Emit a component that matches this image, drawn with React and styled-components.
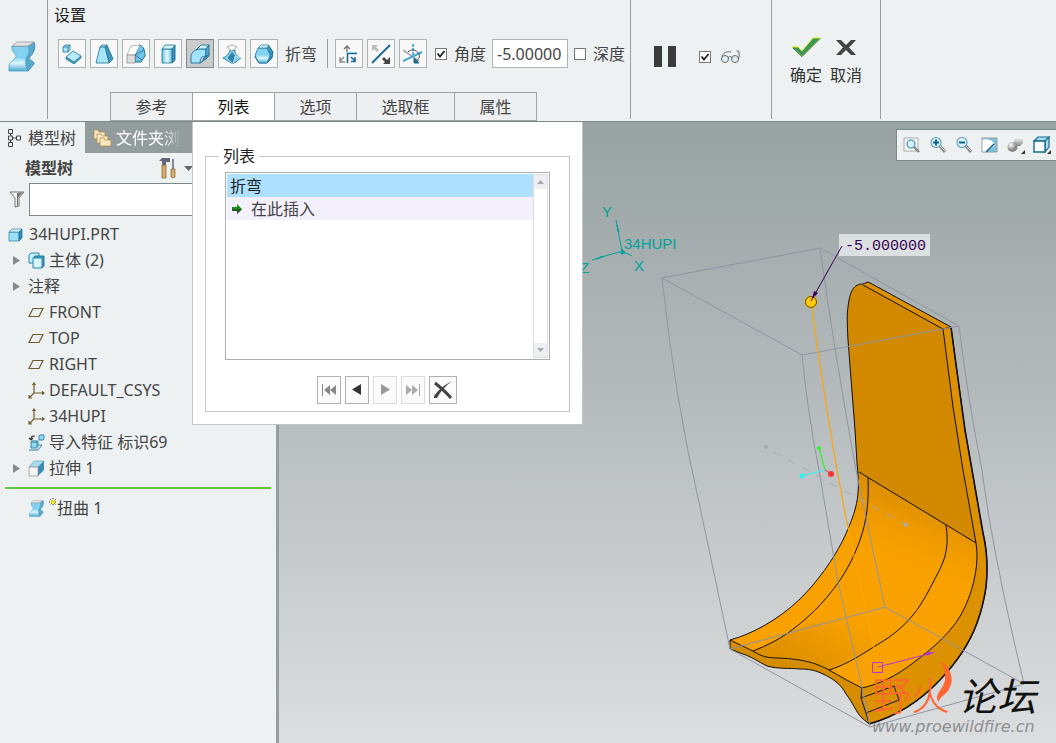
import React from "react";
import styled, { createGlobalStyle } from "styled-components";

const GlobalStyle = createGlobalStyle`
  * { box-sizing: border-box; }
  body {
    margin: 0;
    background: #edf1f2;
    color: #444;
    font: 16px/24px "Noto Sans", "Noto Sans CJK SC", sans-serif;
  }
  button, input { font: inherit; color: inherit; }
`;

const Page = styled.div`
  min-height: 100vh;
  display: flex;
  flex-direction: column;
  overflow: hidden;
`;

/* ---------- ribbon ---------- */

const Ribbon = styled.header`
  display: flex;
  height: 122px;
  background: #edf1f2;
  border-bottom: 1px solid #7c8889;
`;

const Section = styled.section`
  flex: none;
  display: flex;
  flex-direction: ${(p) => (p.$column ? "column" : "row")};
  height: 119px;
  width: ${(p) => p.$width};
  padding: ${(p) => p.$pad || "0"};
  gap: ${(p) => p.$gap || "0"};
  border-right: 1px solid #9a9e9f;
`;

const SectionTitle = styled.h1`
  margin: 0;
  padding-left: 6px;
  font-size: 16px;
  line-height: 24px;
  font-weight: 400;
  color: #222;
`;

const ToolRow = styled.div`
  display: flex;
  align-items: center;
  gap: 4px;
  height: 29px;
  margin: 12px 0 24px;
  padding-left: 10px;
  white-space: nowrap;
`;

const ToolButton = styled.button`
  flex: none;
  width: 28px;
  height: 29px;
  padding: 0;
  display: grid;
  place-items: center;
  border: 1px solid ${(p) => (p.$active ? "#858789" : "#b0b3b4")};
  background: ${(p) => (p.$active ? "#c9cbcd" : "#f8f8f9")};
`;

const ToolLabel = styled.span`
  padding: 0 6px 0 3px;
`;

const ToolDivider = styled.span`
  width: 1px;
  height: 29px;
  margin-right: 3px;
  background: #9a9e9f;
`;

const CheckLabel = styled.label`
  display: flex;
  align-items: center;
  align-self: ${(p) => (p.$top ? "flex-start" : "auto")};
  height: 24px;
  gap: 7px;
  padding: 0 2px 0 ${(p) => (p.$lead ? "4px" : "2px")};
`;

const Check = styled.input`
  appearance: none;
  flex: none;
  width: 12px;
  height: 12px;
  margin: 0;
  border: 1px solid #777;
  background: #fff;
  &:checked {
    background: #fff url("data:image/svg+xml,%3Csvg xmlns='http://www.w3.org/2000/svg' viewBox='0 0 10 10'%3E%3Cpath d='M1.5 4.5 4 7.5 8.5 2' fill='none' stroke='%23222' stroke-width='1.8'/%3E%3C/svg%3E");
  }
`;

const AngleInput = styled.input`
  width: 76px;
  height: 29px;
  padding: 0 4px;
  border: 1px solid #b0b3b4;
  background: #fff;
  border-radius: 0;
`;

const Tabs = styled.nav`
  display: flex;
  padding-left: 62px;
`;

const Tab = styled.button`
  width: ${(p) => (p.$wide ? "99px" : "83px")};
  height: 29px;
  margin-right: -1px;
  padding: 0;
  border: 1px solid #a0a3a5;
  background: ${(p) => (p.$active ? "#fff" : "#edeff1")};
  color: ${(p) => (p.$active ? "#111" : "#444")};
`;

const BareButton = styled.button`
  display: flex;
  flex-direction: column;
  align-items: center;
  gap: 4px;
  padding: 0;
  border: 0;
  background: none;
  color: #333;
`;

/* ---------- side bar ---------- */

const Main = styled.main`
  position: relative;
  flex: 1;
  display: flex;
`;

const Sidebar = styled.aside`
  flex: none;
  width: 279px;
  border-right: 3px solid #949fa0;
  background: #edf1f2;
`;

const SideTabs = styled.div`
  display: flex;
  height: 31px;
  background: #949d9e;
`;

const SideTab = styled.button`
  display: flex;
  align-items: center;
  gap: ${(p) => (p.$active ? "6px" : "4px")};
  width: ${(p) => (p.$active ? "85px" : "107px")};
  padding: 0 0 0 ${(p) => (p.$active ? "7px" : "8px")};
  border: 0;
  overflow: hidden;
  white-space: nowrap;
  background: ${(p) => (p.$active ? "#edf1f2" : "#949d9e")};
  color: ${(p) => (p.$active ? "#444" : "#fff")};
`;

const FadedLabel = styled.span`
  width: 66px;
  overflow: hidden;
  mask-image: linear-gradient(to right, #000 46px, transparent 66px);
`;

const SideHeader = styled.div`
  display: flex;
  align-items: center;
  gap: 8px;
  height: 30px;
  padding-left: 25px;
`;

const SideTitle = styled.h2`
  flex: none;
  width: 126px;
  margin: 0;
  font-size: 16px;
  line-height: 24px;
  font-weight: 700;
`;

const FilterRow = styled.label`
  display: flex;
  align-items: center;
  gap: 4px;
  padding: 0 8px 0 9px;
  margin-bottom: 5px;
`;

const FilterInput = styled.input`
  flex: 1;
  min-width: 0;
  height: 33px;
  border: 1px solid #7c8889;
  background: #fff;
  border-radius: 0;
`;

const Tree = styled.ul`
  list-style: none;
  margin: 0;
  padding: 0;
`;

const TreeItem = styled.li`
  display: flex;
  align-items: center;
  height: 26px;
  gap: 4px;
  padding-left: ${(p) => (p.$root ? "8px" : "12px")};
  white-space: nowrap;
`;

const ArrowSlot = styled.span`
  flex: none;
  display: flex;
  width: 12px;
`;

const MarkedName = styled.span`
  display: flex;
  align-items: center;
`;

const InsertLine = styled.hr`
  height: 2px;
  margin: 6px 5px;
  border: 0;
  background: #62c63f;
`;

/* ---------- list panel ---------- */

const Panel = styled.section`
  position: absolute;
  z-index: 2;
  left: 192px;
  top: 0;
  width: 391px;
  height: 303px;
  padding: 22px 12px 12px;
  border: 1px solid #c3c6c9;
  border-top: 0;
  background: #fff;
`;

const Group = styled.fieldset`
  height: 268px;
  margin: 0;
  padding: 4px 19px 0;
  border: 1px solid #c3c6c9;
`;

const GroupLegend = styled.legend`
  margin-left: -6px;
  padding: 0 4px;
  line-height: 24px;
  color: #222;
`;

const ListBox = styled.div`
  display: flex;
  height: 188px;
  padding: 1px;
  border: 1px solid #aaaeb0;
  background: #fff;
`;

const Options = styled.ul`
  flex: 1;
  list-style: none;
  margin: 0;
  padding: 0;
`;

const Option = styled.li`
  display: flex;
  align-items: center;
  gap: 8px;
  height: 23px;
  padding-left: ${(p) => (p.$selected ? "3px" : "4px")};
  background: ${(p) => (p.$selected ? "#aee1ff" : "#f5f0fe")};
  color: ${(p) => (p.$selected ? "#222" : "#444")};
`;

const ScrollTrack = styled.div`
  display: flex;
  flex-direction: column;
  justify-content: space-between;
  width: 15px;
  border: 1px solid #dcdee3;
`;

const ScrollButton = styled.button`
  display: grid;
  place-items: center;
  width: 13px;
  height: 14px;
  padding: 0;
  border: 0;
  background: #eeeff3;
`;

const NavRow = styled.div`
  display: flex;
  justify-content: center;
  gap: 4px;
  padding: 16px 2px 0 0;
`;

const NavButton = styled.button`
  display: grid;
  place-items: center;
  width: ${(p) => (p.$wide ? "28px" : "24px")};
  height: 28px;
  padding: 0;
  border: 1px solid ${(p) => (p.disabled ? "#d8dbdd" : "#b0b3b5")};
  background: #fbfbfb;
`;

/* ---------- graphics area ---------- */

const Viewport = styled.section`
  position: relative;
  flex: 1;
  display: flex;
  min-width: 0;
  background: linear-gradient(#98a2a3, #b9bec0 50%, #dcdedf);
`;

const Scene = styled.svg`
  flex: 1;
  width: 100%;
  display: block;
`;

const ViewBar = styled.div`
  position: absolute;
  top: 7px;
  right: 0;
  display: flex;
  align-items: center;
  gap: 8px;
  height: 32px;
  padding: 0 5px 0 6px;
  border: 1px solid #7c8889;
  border-right: 0;
  background: #edf1f2;
`;

const ViewButton = styled.button`
  display: grid;
  place-items: center;
  width: 18px;
  height: 20px;
  padding: 0;
  border: 0;
  background: none;
`;

/* ---------- icons ---------- */

const DefsSvg = styled.svg`
  position: absolute;
`;

const Defs = () => (
  <DefsSvg width="0" height="0" aria-hidden="true">
    <defs>
      <linearGradient id="iceV" x2="0" y2="1">
        <stop stopColor="#8ad0ec" /><stop offset=".45" stopColor="#7fd3f3" /><stop offset=".68" stopColor="#e0f7ff" /><stop offset="1" stopColor="#4aa9d2" />
      </linearGradient>
      <linearGradient id="iceH">
        <stop stopColor="#62bfe5" /><stop offset=".5" stopColor="#e8faff" /><stop offset="1" stopColor="#65bde0" />
      </linearGradient>
      <linearGradient id="grey" x2="0" y2="1">
        <stop stopColor="#fff" /><stop offset="1" stopColor="#888" />
      </linearGradient>
      <radialGradient id="ball" cx=".35" cy=".3">
        <stop stopColor="#fff" /><stop offset="1" stopColor="#888" />
      </radialGradient>
    </defs>
  </DefsSvg>
);

const Icon = ({ w = 20, h = w, box, children }) => (
  <svg width={w} height={h} viewBox={box || `0 0 ${w} ${h}`} fill="none" aria-hidden="true">
    {children}
  </svg>
);

const WarpIcon = ({ w, h }) => (
  <Icon w={w} h={h} box="0 0 28 31">
    <path d="M20 5 26 1C28 7 26 12 21 17 20 19 27 20 26 23L20 30 15 18z" fill="#58a9cd" stroke="#2f7ea8" strokeWidth=".8" />
    <path d="M4 5H20C22 10 21 13 18 17 17 22 18 26 20 30H1V25C1 21 6 20 8 16 9 13 3 11 4 5z" fill="url(#iceV)" stroke="#4aa0c6" strokeWidth=".8" />
    <path d="M4 5 9 1h17l-6 4z" fill="#e4e4e6" stroke="#999" strokeWidth=".8" />
  </Icon>
);

const dark = "#1e7196";
const toolIcons = [
  ["变换", <Icon><path d="M1 3 3 1h5v5L6 8H1zM1 3h5v5M6 3l2-2" fill="#a9e5fa" stroke={dark} strokeWidth=".8" /><path d="M4 13v2l8 5 7-6v-2l-7 6z" fill="#4ba2c8" stroke={dark} strokeWidth=".7" /><path d="m4 13 7-6 8 5-7 6z" fill="#b6ebfc" stroke={dark} strokeWidth=".8" /></Icon>],
  ["锥度", <Icon><path d="m6 3 2-2h5l-2 2z" fill="#d8f3fc" stroke={dark} strokeWidth=".8" /><path d="m11 3 2-2 6 14-4 4z" fill="#3f96bf" stroke={dark} strokeWidth=".8" /><path d="M6 3h5l4 16H2z" fill="#a8e5fa" stroke={dark} strokeWidth=".8" /></Icon>],
  ["骨架", <Icon><path d="M13 1c5 1 6 6 6 11l-4 6H9v-6z" fill="#70c4e7" stroke={dark} /><path d="M1 11 5 2l9-1-5 10z" fill="#fff" stroke="#999" strokeWidth=".7" /><path d="M1 11h8v8H1z" fill="#ddd" stroke="#888" strokeWidth=".7" /><path d="m9 11 9-5M9 11l7 5" stroke={dark} strokeWidth=".8" /></Icon>],
  ["拉伸", <Icon><path d="M14 5 17 1v15l-3 3z" fill="#3c95be" stroke={dark} /><path d="M4 5h10v14H4z" fill="url(#iceH)" stroke={dark} strokeWidth=".8" /><path d="m4 5 3-4h10l-3 4z" fill="#d1f3ff" stroke={dark} strokeWidth=".8" /></Icon>],
  ["折弯", <Icon><path d="m10 19 3-2c0-3 1-4 3-5l3-3v3l-3 3z" fill="#3d91b8" stroke={dark} strokeWidth=".8" /><path d="M1 19v-6c0-4 3-7 8-8h7v7c-4 0-6 2-6 7z" fill="#a2e4fa" stroke={dark} strokeWidth=".9" /><path d="M6 6 11 1h8l-3 4H9z" fill="#d0f1fd" stroke={dark} strokeWidth=".9" /><path d="m16 5 3-4v9l-3 3z" fill="#53a8cc" stroke={dark} strokeWidth=".9" /></Icon>],
  ["扭转", <Icon><path d="M8 6C7 10 5 12 1 14l10 6 8-6c-5-2-6-5-6-8l-3 1z" fill="#83cfee" stroke={dark} strokeWidth=".8" /><path d="m10 7-5 7 6 6 2-8 6 2-6-3z" fill="#2f83ac" stroke="#d4f1fb" strokeWidth=".6" /><path d="m5 3 5-2 5 2-5 4z" fill="#fff" stroke="#999" strokeWidth=".8" /></Icon>],
  ["雕刻", <Icon><path d="m4 5 3-3h8l4 6-1 6-5 5H5l-4-6z" fill="#3790b9" stroke={dark} /><path d="M4 4h9l3 7-3 8H5l-4-8z" fill="url(#iceV)" stroke={dark} strokeWidth=".6" /><path d="m4 4 3-3h8l-2 3z" fill="#d1f1fd" stroke={dark} strokeWidth=".7" /></Icon>],
];

const axisIcons = [
  ["切换轴", <Icon><path d="M8 8V3M5 5l3-3 3 3" stroke="#777" strokeWidth="1.4" /><path d="M5 13l-4 4M1 13v5h5" stroke="#888" strokeWidth="1.4" /><path d="M18 9.500H8.500V19" stroke="#1b6c90" strokeWidth="1.600" /><path d="m12 13 4 4m0-4v4.500h-4" stroke="#1b6c90" strokeWidth="1.600" /><path d="M8 8.500h10" stroke="#78cfee" /></Icon>],
  ["反转轴", <Icon><path d="m1 19 18-18" stroke="#1b6c90" strokeWidth="2" /><path d="M1 1h6L5 3l3 3-2 2-3-3-2 2z" fill="#bbb" /><path d="M19 20h-7l2-2-3-3 2-2 3 3 3-3z" fill="#444" /></Icon>],
  ["轴向增量", <Icon><path d="m0 6 10 7 6 4" stroke="#aaa" strokeWidth="1.6" /><path d="M0 17 19 8" stroke="#43a7d0" strokeWidth="2" /><path d="M10 0v11" stroke="#43a7d0" strokeWidth="1.8" strokeDasharray="3 1" /><path d="M5 8c3-3 8-3 11 2 1 3 0 5-3 7" stroke="#555" /><path d="M11 14v5h5z" fill="#1b6c90" stroke="#1b6c90" /></Icon>],
];

const TreeArrow = () => <Icon w={8} h={9}><path d="M1 0 8 4.5 1 9z" fill="#888" /></Icon>;
const PlaneIcon = () => <Icon w={17} h={17}><path d="M5 4.500h10l-4 8H1z" stroke="#705b2d" strokeWidth="1.200" /></Icon>;
const CsysIcon = () => <Icon w={17} h={17}><path d="M6 1v10h10M6 11l-5 5M4.500 3 6 1l1.500 2M14 9.500l2 1.500-2 1.500M1 13v3h3" stroke="#705b2d" strokeWidth="1.200" /></Icon>;
const PartIcon = () => <Icon w={17} h={17}><path d="M1 6h10v9H1z" fill="#9de1f8" stroke="#2c7fa5" strokeWidth=".7" /><path d="m1 6 3-3h10l-3 3z" fill="#d5f3fc" stroke="#2c7fa5" strokeWidth=".7" /><path d="m11 6 3-3v9l-3 3z" fill="#3289b2" stroke="#24739a" strokeWidth=".7" /></Icon>;
const BodyIcon = () => <Icon w={17} h={17}><path d="M1 3 3 1h8v10H1z" fill="#c5eefb" stroke="#2987ae" /><path d="m5 6 2-2h9v10l-2 2z" fill="#3f99c2" stroke="#207ba2" /><path d="M5 6h9v10H5z" fill="#d8f5ff" stroke="#2987ae" /></Icon>;
const ImportIcon = () => <Icon w={17} h={17}><path d="M3 5c0-3 2-3 4-3M1 4l2 2 2-2" stroke="#333" strokeWidth="1.200" /><path d="M11 2 12 1h4v4l-1 1h-4zM3 8h6v6H3z" fill="#90daf5" stroke="#267ca2" strokeWidth=".9" /><path d="M1 16h9l4-5h-3M3 8l1-1h6v6" stroke="#267ca2" /></Icon>;
const ExtrudeIcon = () => <Icon w={17} h={17}><path d="M1 7 6 1h10l-6 6z" fill="#a8d9ec" stroke="#6eaac2" strokeWidth=".7" /><path d="m10 7 6-6v9l-6 6z" fill="#398db5" /><path d="M1 7h9v9H1z" fill="#f5f3f5" stroke="#999" strokeWidth=".8" /></Icon>;

const StarMark = () => <Icon w={8} h={20}><path d="M4 0v8M0 4h8M1 1l6 6M7 1 1 7" stroke="#333" strokeDasharray="1 1" /><circle cx="4" cy="4" r="2" fill="#fdf000" /></Icon>;

const Lens = ({ sign }) => (
  <Icon w={18} h={18}>
    <path d="m11 10 5 6" stroke="#888" strokeWidth="3" /><path d="m11 10 5 5" stroke="#ddd" />
    <circle cx="7" cy="6.500" r="5" fill="#daf1fb" stroke="#5a9dba" strokeWidth="1.100" />
    <path d={sign} stroke="#0d658c" strokeWidth="2" />
  </Icon>
);

const viewIcons = [
  ["重新调整", <Icon w={18} h={18}><path d="M1 2h14v13H1z" fill="#f8f9fa" stroke="#aaa" /><path d="m11 11 5 5" stroke="#888" strokeWidth="2.400" /><circle cx="8" cy="8" r="4" fill="#d7f1fb" stroke="#3287ab" strokeWidth="1.100" /></Icon>],
  ["放大", <Lens sign="M4 6.500h6M7 3.500v6" />],
  ["缩小", <Lens sign="M4 6.500h6" />],
  ["重画", <Icon w={18} h={18}><path d="M1 2h15v14H1z" fill="#7bc3df" stroke="#999" /><path d="M1.500 3.500c7-1 11 1 12 6L5 15.500H1.500z" fill="#fff" /><path d="m5 16 8-8" stroke="#155f84" strokeWidth="1.500" /></Icon>],
  ["显示样式", <Icon w={18} h={18}><path d="M7 4 9 1h7v6l-3 3H7z" fill="url(#grey)" /><circle cx="5.500" cy="11" r="5" fill="url(#ball)" /><path d="M18 14v4h-4z" fill="#333" /></Icon>],
  ["已保存方向", <Icon w={18} h={18}><path d="m1 5 4-4h11l-4 4zM12 5l4-4v10l-4 5z" fill="#a9dced" stroke="#176b91" strokeWidth="1.200" /><path d="M1 5h11v11H1z" fill="#fff" stroke="#176b91" strokeWidth="1.400" /><path d="M18 14v4h-4z" fill="#333" /></Icon>],
];

/* ---------- data ---------- */

const treeRows = [
  { icon: <BodyIcon />, text: "主体 (2)", open: true },
  { icon: null, text: "注释", open: true },
  { icon: <PlaneIcon />, text: "FRONT" },
  { icon: <PlaneIcon />, text: "TOP" },
  { icon: <PlaneIcon />, text: "RIGHT" },
  { icon: <CsysIcon />, text: "DEFAULT_CSYS" },
  { icon: <CsysIcon />, text: "34HUPI" },
  { icon: <ImportIcon />, text: "导入特征 标识69" },
  { icon: <ExtrudeIcon />, text: "拉伸 1", open: true },
];

const navIcons = [
  ["第一个", false, <Icon w={16} h={14}><path d="M1.500 1v12" stroke="#888" /><path d="M9 2v10L3 7zM15 2v10L9 7z" fill="#888" /></Icon>],
  ["上一个", false, <Icon w={16} h={14}><path d="M12 1v11L3 6.500z" fill="#333" /></Icon>],
  ["下一个", true, <Icon w={16} h={14}><path d="M4 1v11l9-5.500z" fill="#999" /></Icon>],
  ["最后一个", true, <Icon w={16} h={14}><path d="M14.500 1v12" stroke="#aaa" /><path d="M1 2v10l6-5zM7 2v10l6-5z" fill="#aaa" /></Icon>],
];

/* ---------- 3D scene ---------- */

const RIGHT_EDGE =
  "L955 357L965 430L983 533C987 550 988 568 986 587C984 601 981 612 977 623C969 645 957 662 940 680C921 700 898 716 869 724";
const BOTTOM_EDGE =
  "L862 718C856 712 853 703 846 694C841 684 832 678 823 674C815 670 808 669 800 669C788 668 778 669 767 666C757 661 752 657 743 654L730 649";
const OUTLINE =
  `M730 640C752 634 778 620 800 599C818 581 833 560 843 540C852 521 857 507 858 493C859 483 858 473 857 463L855 430L848 340C847 322 847 313 848 307C850 290 854 284 863 284L868 282L872 284L951 327${RIGHT_EDGE}${BOTTOM_EDGE}Z`;
const RIM = "C979 562 975 585 965 607C955 629 936 646 913 663C896 676 880 684 862 688";
const PROFILE = "M730 640L753 651C762 657 769 658 778 658C805 659 818 664 829 670C841 677 852 683 862 688";

const Graphics = () => (
  <Scene viewBox="279 122 777 621" preserveAspectRatio="xMinYMin slice" role="img" aria-label="34HUPI">
    <defs>
      <linearGradient id="seat" gradientUnits="userSpaceOnUse" x1="930" y1="495" x2="905" y2="560">
        <stop stopColor="#d78c00" /><stop offset=".500" stopColor="#ed9900" /><stop offset="1" stopColor="#f8a100" />
      </linearGradient>
      <linearGradient id="lip" gradientUnits="userSpaceOnUse" x1="830" y1="610" x2="800" y2="665">
        <stop stopColor="#d88d00" stopOpacity="0" /><stop offset="1" stopColor="#d88d00" stopOpacity=".8" />
      </linearGradient>
    </defs>

    <path d={OUTLINE} fill="url(#seat)" />
    <path d="M753 651C790 635 830 595 880 643L829 670C818 664 805 659 778 658C769 658 762 657 753 651Z" fill="url(#lip)" />
    <path d="M859 472L857 450L848 340C847 313 847 284 863 284L943 329L963 470L976 543Z" fill="#d28900" />
    <path d={`M863 284L868 282L872 284L951 327${RIGHT_EDGE}L862 688C880 684 896 676 913 663C936 646 955 629 965 607C975 585 979 562 976 543L963 470L943 329Z`} fill="#dc9100" />
    <path d={`${PROFILE}L869 724${BOTTOM_EDGE}Z`} fill="#d68c00" />

    <g fill="none" stroke="#111">
      <path d={OUTLINE} />
      <path d={`M951 327${RIGHT_EDGE}`} strokeWidth="1.600" />
      <path d="M863 285L943 329L951 327M943 329L953 407L963 470L976 543M859 472L976 543" />
      <path d={`M976 543${RIM}`} />
      <path d={PROFILE} />
      <path d="M868 478C869 500 867 521 860 540C854 557 847 570 838 583C823 604 807 619 788 633C778 640 766 646 753 651" />
      <path d="M946 525C949 545 946 558 938 573C930 588 923 603 913 615C903 627 892 636 880 643C864 653 848 664 829 670" />
      <path d="M862 688L861 698L866 713L869 724M861 698L894 686L899 700L866 713" />
    </g>

    <g fill="none" stroke="#8f96a3">
      <path d="M662 278L820 248L959 326L802 355Z" />
      <path d="M662 278Q675 400 700 507L730 649M820 248Q834 350 856 470L885 607M802 355Q808 415 819 470L838 582L862 687L870 727M959 326Q968 400 982 470Q992 550 1024 684" />
      <path d="M730 649L885 607L1024 684L870 727Z" />
    </g>

    <path d="M812 308Q820 370 837 470L847 523L877 663" fill="none" stroke="#ffa500" strokeWidth="1.200" />
    <path d="M774 452L906 525" stroke="#a9adb0" strokeDasharray="8 8" />
    <circle cx="766" cy="447" r="2" fill="#a6abad" /><circle cx="906" cy="525" r="2" fill="#aaadb0" />
    <path d="M819 448L825 470" stroke="#2cf52c" strokeWidth="1.200" />
    <path d="M802 476L825 470" stroke="#30f4f4" strokeWidth="1.200" />
    <path d="M825 470L831 474" stroke="#f33" />
    <circle cx="819" cy="448" r="2" fill="#2cf52c" /><circle cx="802" cy="476" r="2.500" fill="#30f4f4" /><circle cx="831" cy="474" r="3" fill="#fa3434" />
    <path d="M872.500 662.500h10v10h-10zM878 667L928 654" fill="none" stroke="#b536d5" />
    <path d="M935 652l-8 4-1-4z" fill="#b536d5" />

    <g stroke="#00a29a" fill="#00a29a">
      <path d="M622 251L616 220M622 251L592 260M622 251L632 256" fill="none" />
      <path d="M617 225l2 7h-1zM596 259l7-3v1zM622 249l3 4-4 1z" />
    </g>
    <g fill="#00a29a" fontFamily="Liberation Sans, sans-serif" fontSize="15">
      <text x="602" y="217">Y</text>
      <text x="634" y="271">X</text>
      <text x="580" y="273">Z</text>
      <text x="624" y="249">34HUPI</text>
    </g>

    <rect x="839" y="234" width="91" height="22" fill="#fff" fillOpacity=".620" />
    <text x="845" y="250" fill="#350057" fontFamily="Liberation Mono, monospace" fontSize="15">-5.000000</text>
    <circle cx="811" cy="302" r="6" fill="#ffc90d" stroke="#ffbf00" />
    <circle cx="811" cy="302" r="5.500" fill="none" stroke="#5f4a08" />
    <path d="M842 246L811 301" stroke="#350057" />
    <path d="M812 299l2-8 4 2z" fill="#350057" />

    <g fontFamily="Noto Sans CJK SC, sans-serif" fontSize="39">
      <g fill="#ff6632">
        <text x="872" y="710" fontWeight="300">野</text>
        <text x="911" y="710" fontWeight="300">火</text>
        <path d="M941 661c11 8 15 22 5 31-5 3-7 7-7 10-7-7 7-15 6-24 0-6-1-11-4-17zM947 671c6 7 5 18-3 24-4 3-5 5-5 7-6-9 12-12 8-31z" />
      </g>
      <text x="958" y="711" fill="#111" fontStyle="italic">论坛</text>
    </g>
    <text x="872" y="732" fill="#8d8f92" fontFamily="DejaVu Sans, sans-serif" fontStyle="italic" fontSize="16">www.proewildfire.cn</text>
  </Scene>
);

/* ---------- app ---------- */

export default function App() {
  return (
    <Page>
      <GlobalStyle />
      <Defs />
      <Ribbon>
        <Section $width="48px" $pad="41px 0 0 8px"><WarpIcon w={28} h={31} /></Section>
        <Section $width="583px" $pad="3px 0 0" $column>
          <SectionTitle>设置</SectionTitle>
          <ToolRow>
            {toolIcons.map(([name, icon], i) => (
              <ToolButton key={name} aria-label={name} $active={i === 4}>{icon}</ToolButton>
            ))}
            <ToolLabel>折弯</ToolLabel>
            <ToolDivider />
            {axisIcons.map(([name, icon]) => (
              <ToolButton key={name} aria-label={name}>{icon}</ToolButton>
            ))}
            <CheckLabel $lead><Check type="checkbox" defaultChecked />角度</CheckLabel>
            <AngleInput aria-label="角度" defaultValue="-5.00000" />
            <CheckLabel><Check type="checkbox" />深度</CheckLabel>
          </ToolRow>
          <Tabs>
            <Tab>参考</Tab>
            <Tab $active>列表</Tab>
            <Tab>选项</Tab>
            <Tab $wide>选取框</Tab>
            <Tab>属性</Tab>
          </Tabs>
        </Section>
        <Section $width="141px" $pad="45px 0 0 22px" $gap="20px">
          <BareButton aria-label="暂停">
            <Icon w={24} h={23}><path d="M1 1h8v21H1zM15 1h8v21h-8z" fill="#3b3b3b" /></Icon>
          </BareButton>
          <CheckLabel $top>
            <Check type="checkbox" defaultChecked aria-label="预览" />
            <Icon w={24} h={14}><g stroke="#666"><circle cx="7" cy="9" r="3.500" fill="#e2f0f6" /><circle cx="17" cy="9" r="3.500" fill="#e2f0f6" /><path d="M4 7c1-4 4-6 9-5M10 8c1-2 3-2 4 0M20.500 9c1-3 1-5 0-8h-2" /></g></Icon>
          </CheckLabel>
        </Section>
        <Section $width="109px" $pad="35px 0 0 18px" $gap="8px">
          <BareButton>
            <Icon w={30} h={24}><path d="M1 12h6l4 4L22 3h7L11 21z" fill="#379660" stroke="#d5e800" /><path d="M2 13 11 21.500 29 3.500" stroke="#176039" /></Icon>
            确定
          </BareButton>
          <BareButton>
            <Icon w={20} h={24}><path d="M0 5h5l5 5 5-5h5l-7 7.500 7 7.500h-5l-5-5-5 5H0l7-7.500z" fill="#444" /></Icon>
            取消
          </BareButton>
        </Section>
      </Ribbon>

      <Main>
        <Sidebar>
          <SideTabs>
            <SideTab $active>
              <Icon w={15} h={20}><path d="M1.500 1.500h4v4h-4zM1.500 8h4v4h-4zM1.500 14.500h4v4h-4zM9.500 8h4v4h-4zM3.500 5.500V8M3.500 12v2.500M5.500 10h4" stroke="#444" /></Icon>
              模型树
            </SideTab>
            <SideTab>
              <Icon w={19} h={19}><g fill="#fbe8c0" stroke="#a98546" strokeWidth=".700"><path d="M1 2h4l1 2h6v7H1z" /><path d="M4 6h4l1 2h6v7H4z" /><path d="M7 10h4l1 2h6v6H7z" /></g></Icon>
              <FadedLabel>文件夹浏览器</FadedLabel>
            </SideTab>
          </SideTabs>
          <SideHeader>
            <SideTitle>模型树</SideTitle>
            <Icon w={17} h={21}><path d="M0 3 3 0h8v4H7v3H3V3z" fill="#667" /><path d="M3 7h4v13H3zM12 11h4v8l-2 1-2-1z" fill="#d7ad68" stroke="#805d2d" strokeWidth=".700" /><path d="M14 1v10" stroke="#667" strokeWidth="1.500" /></Icon>
            <Icon w={9} h={5}><path d="M0 0h9L4.500 5z" fill="#666" /></Icon>
          </SideHeader>
          <FilterRow>
            <Icon w={16} h={17}><path d="M1 1h14l-5 6v8l-4 1V7z" fill="#f4f4f4" stroke="#777" /><path d="m8 2 6-1-5 6v8H8z" fill="#777" /></Icon>
            <FilterInput aria-label="过滤" />
          </FilterRow>
          <Tree>
            <TreeItem $root><PartIcon />34HUPI.PRT</TreeItem>
            {treeRows.map((row) => (
              <TreeItem key={row.text}>
                <ArrowSlot>{row.open && <TreeArrow />}</ArrowSlot>
                {row.icon}
                {row.text}
              </TreeItem>
            ))}
          </Tree>
          <InsertLine />
          <Tree>
            <TreeItem>
              <ArrowSlot />
              <WarpIcon w={17} h={17} />
              <MarkedName><StarMark />扭曲 1</MarkedName>
            </TreeItem>
          </Tree>
        </Sidebar>

        <Panel>
          <Group>
            <GroupLegend>列表</GroupLegend>
            <ListBox>
              <Options>
                <Option $selected>折弯</Option>
                <Option>
                  <Icon w={12} h={12}><path d="M1 4h5V1l5 5-5 5V8H1z" fill="#149313" /><path d="M1 6h10l-5 5V8H1z" fill="#26552a" /></Icon>
                  在此插入
                </Option>
              </Options>
              <ScrollTrack>
                <ScrollButton aria-label="向上"><Icon w={7} h={4}><path d="M0 4 3.500 0 7 4z" fill="#aaa" /></Icon></ScrollButton>
                <ScrollButton aria-label="向下"><Icon w={7} h={4}><path d="m0 0 3.500 4L7 0z" fill="#aaa" /></Icon></ScrollButton>
              </ScrollTrack>
            </ListBox>
            <NavRow>
              {navIcons.map(([name, off, icon]) => (
                <NavButton key={name} aria-label={name} disabled={off}>{icon}</NavButton>
              ))}
              <NavButton $wide aria-label="删除">
                <Icon w={20} h={20}><path d="M2 3c5 4 10 8 16 15" stroke="#444" strokeWidth="3" /><path d="M19 1C12 6 7 12 4 18H1v-2C5 10 11 5 19 1z" fill="#444" /></Icon>
              </NavButton>
            </NavRow>
          </Group>
        </Panel>

        <Viewport>
          <Graphics />
          <ViewBar>
            {viewIcons.map(([name, icon]) => (
              <ViewButton key={name} aria-label={name}>{icon}</ViewButton>
            ))}
          </ViewBar>
        </Viewport>
      </Main>
    </Page>
  );
}
